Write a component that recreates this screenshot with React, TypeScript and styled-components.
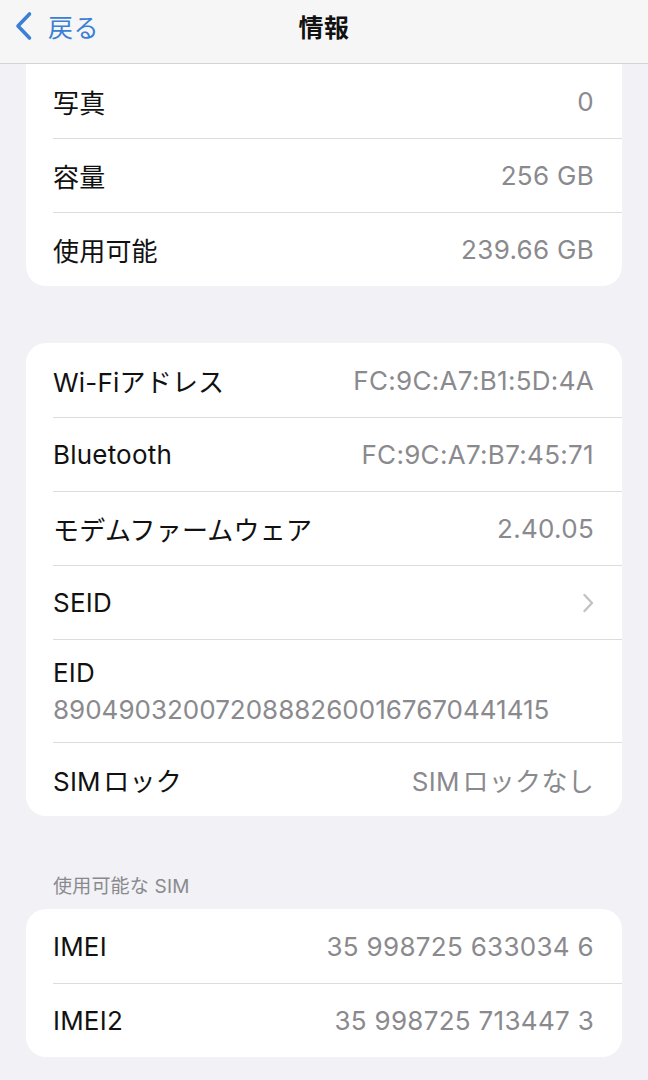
import styled, { createGlobalStyle } from "styled-components";

const GlobalStyle = createGlobalStyle`
  html, body {
    margin: 0;
    padding: 0;
    background: #f1f1f6;
  }
  body {
    font-family: Inter, "Noto Sans CJK JP", sans-serif;
    -webkit-font-smoothing: antialiased;
  }
`;

const Screen = styled.div`
  width: 648px;
  height: 1080px;
  overflow: hidden;
  background: #f1f1f6;
  font-family: Inter, "Noto Sans CJK JP", sans-serif;
`;

const NavBar = styled.header`
  display: grid;
  grid-template-columns: 1fr auto 1fr;
  align-items: center;
  height: 64px;
  box-sizing: border-box;
  padding: 0 14px 11px;
  background: #f6f6f6;
  border-bottom: 1px solid #d4d4d6;
`;

const BackButton = styled.div`
  display: flex;
  align-items: center;
  gap: 15px;
  color: #3b80d4;
  font-size: 25px;
  letter-spacing: 0.5px;
`;

const Title = styled.h1`
  margin: 0;
  font-size: 25px;
  font-weight: 700;
  color: #111;
  letter-spacing: 0.5px;
`;

const Content = styled.main`
  padding: 0 26px;
  display: flex;
  flex-direction: column;
`;

const Card = styled.section<{ $clipTop?: boolean; $gap?: number }>`
  background: #fff;
  border-radius: ${(p) => (p.$clipTop ? "0 0 20px 20px" : "20px")};
  margin-top: ${(p) => p.$gap ?? 0}px;
  overflow: hidden;
`;

const Row = styled.div`
  padding-left: 27px;
`;

const RowInner = styled.div<{ $tall?: boolean }>`
  display: flex;
  flex-direction: ${(p) => (p.$tall ? "column" : "row")};
  justify-content: ${(p) => (p.$tall ? "center" : "space-between")};
  align-items: ${(p) => (p.$tall ? "flex-start" : "center")};
  gap: ${(p) => (p.$tall ? "6px" : "0")};
  height: ${(p) => (p.$tall ? 103 : 74)}px;
  box-sizing: border-box;
  padding-right: 28px;
  border-top: 1px solid #dcdcde;

  ${Row}:first-child & {
    border-top: none;
  }
`;

const Label = styled.span`
  font-size: 26px;
  color: #111;
  letter-spacing: 0.2px;
`;

const Value = styled.span<{ $tight?: boolean }>`
  font-size: 26px;
  color: #8a8a8e;
  letter-spacing: ${(p) => (p.$tight ? "0" : "0.3px")};
`;

const SectionHeader = styled.div`
  margin-top: 55px;
  padding: 0 27px 11px;
  font-size: 19px;
  color: #8a8a8e;
  letter-spacing: 0.2px;
`;

function BackChevron() {
  return (
    <svg width="19" height="30" viewBox="0 0 19 30">
      <path
        d="M15.5 3 L4 15 L15.5 27"
        fill="none"
        stroke="#3b80d4"
        strokeWidth="3.6"
        strokeLinecap="round"
        strokeLinejoin="round"
      />
    </svg>
  );
}

function Disclosure() {
  return (
    <svg width="12" height="20" viewBox="0 0 12 20">
      <path
        d="M2.5 2 L10 10 L2.5 18"
        fill="none"
        stroke="#c3c3c7"
        strokeWidth="2.4"
        strokeLinecap="round"
        strokeLinejoin="round"
      />
    </svg>
  );
}

type Item = { label: string; value?: string; chevron?: boolean; tall?: boolean };

const storage: Item[] = [
  { label: "写真", value: "0" },
  { label: "容量", value: "256 GB" },
  { label: "使用可能", value: "239.66 GB" },
];

const network: Item[] = [
  { label: "Wi-Fiアドレス", value: "FC:9C:A7:B1:5D:4A" },
  { label: "Bluetooth", value: "FC:9C:A7:B7:45:71" },
  { label: "モデムファームウェア", value: "2.40.05" },
  { label: "SEID", chevron: true },
  { label: "EID", value: "89049032007208882600167670441415", tall: true },
  { label: "SIM\u200Aロック", value: "SIM\u200Aロックなし" },
];

const sims: Item[] = [
  { label: "IMEI", value: "35 998725 633034 6" },
  { label: "IMEI2", value: "35 998725 713447 3" },
];

function Rows({ items }: { items: Item[] }) {
  return (
    <>
      {items.map((it) => (
        <Row key={it.label}>
          <RowInner $tall={it.tall}>
            <Label>{it.label}</Label>
            {it.value && <Value $tight={it.tall}>{it.value}</Value>}
            {it.chevron && <Disclosure />}
          </RowInner>
        </Row>
      ))}
    </>
  );
}

export default function App() {
  return (
    <Screen>
      <GlobalStyle />
      <NavBar>
        <BackButton>
          <BackChevron />
          <span>戻る</span>
        </BackButton>
        <Title>情報</Title>
        <div />
      </NavBar>
      <Content>
        <Card $clipTop>
          <Rows items={storage} />
        </Card>
        <Card $gap={57}>
          <Rows items={network} />
        </Card>
        <SectionHeader>使用可能な SIM</SectionHeader>
        <Card>
          <Rows items={sims} />
        </Card>
      </Content>
    </Screen>
  );
}
